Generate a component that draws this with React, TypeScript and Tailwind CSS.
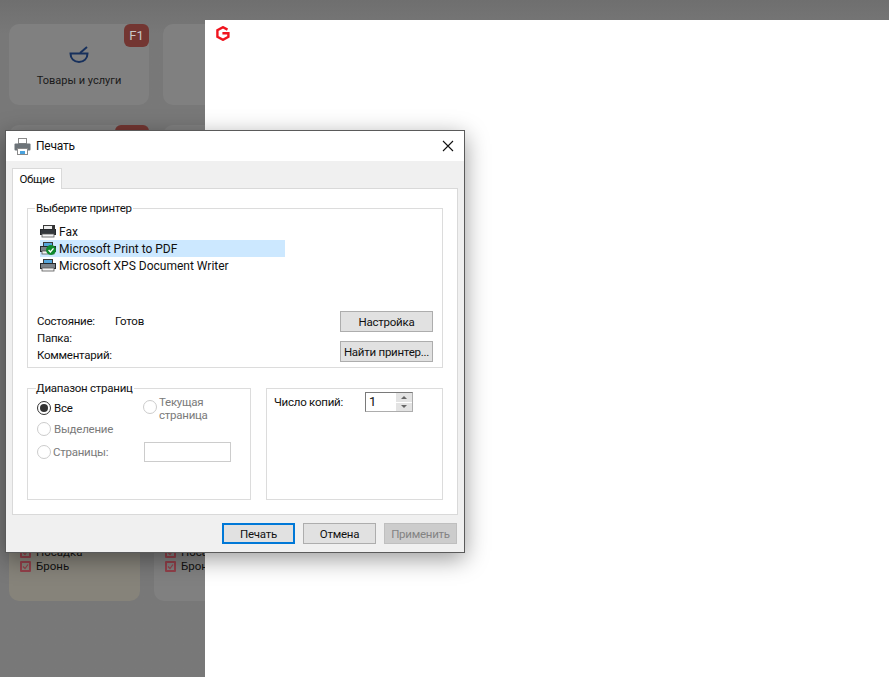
const FONT = "font-['Roboto',sans-serif]";

function PrinterIcon({ kind }: { kind: "fax" | "pdf" | "xps" }) {
  return (
    <svg width="17" height="13" viewBox="0 0 17 13" className="shrink-0">
      <rect x="3.5" y="0.5" width="9" height="4" fill={kind === "fax" ? "#ededed" : "#55a6dc"} stroke="#3a3a3a" />
      <rect x="0.5" y="4.5" width="15" height="5" fill={kind === "fax" ? "#34383c" : "#7c8389"} stroke="#26292c" />
      <rect x="2" y="9" width="12" height="3" fill="#f6f6f6" stroke="#555" strokeWidth="0.8" />
      {kind === "fax" && <rect x="13" y="0" width="2" height="5" fill="#333" />}
      {kind === "pdf" && (
        <>
          <circle cx="11" cy="8" r="5" fill="#0f8a2d" />
          <path d="M8.6 8 L10.4 9.9 L13.5 6.4" stroke="#fff" strokeWidth="1.4" fill="none" />
        </>
      )}
    </svg>
  );
}

function Radio({ checked, disabled }: { checked?: boolean; disabled?: boolean }) {
  return (
    <span
      className={`flex h-[14px] w-[14px] shrink-0 items-center justify-center rounded-full border bg-white ${
        disabled ? "border-[#cccccc]" : "border-[#333333]"
      }`}
    >
      {checked && <span className="h-2 w-2 rounded-full bg-[#333333]" />}
    </span>
  );
}

function WinButton({ label, focused, disabled, className = "" }: { label: string; focused?: boolean; disabled?: boolean; className?: string }) {
  return (
    <div
      className={`flex h-[21px] items-center justify-center whitespace-nowrap ${
        focused ? "border-2 border-[#0078d7]" : disabled ? "border border-[#bfbfbf]" : "border border-[#adadad]"
      } ${disabled ? "bg-[#cccccc] text-[#838383]" : "bg-[#e1e1e1] text-[#111]"} ${className}`}
    >
      {label}
    </div>
  );
}

function PrintDialog() {
  return (
    <div className={`absolute left-[5px] top-[130px] flex h-[423px] w-[460px] flex-col border border-[#5a5a5a] bg-[#f0f0f0] text-[11.5px] leading-[16px] tracking-[-0.25px] text-[#111] shadow-[0_6px_22px_rgba(0,0,0,0.4)] ${FONT}`}>
      <div className="flex h-[30px] shrink-0 items-center bg-white pl-[8px] pr-[10px]">
        <svg width="17" height="17" viewBox="0 0 17 17">
          <rect x="4.5" y="0.5" width="8" height="5" fill="#fff" stroke="#8a8a8a" />
          <rect x="0.5" y="5.5" width="16" height="7" rx="1" fill="#6d7479" />
          <rect x="3.5" y="10.5" width="10" height="6" fill="#fff" stroke="#8a8a8a" />
          <rect x="6" y="13" width="5" height="3" fill="#4aa3df" />
        </svg>
        <span className="ml-[5px] text-[12px]">Печать</span>
        <svg width="12" height="12" viewBox="0 0 12 12" className="ml-auto">
          <path d="M1 1 L11 11 M11 1 L1 11" stroke="#111" strokeWidth="1.1" />
        </svg>
      </div>

      <div className="flex flex-1 flex-col px-[6px] pt-[7px]">
        <div className="relative z-10 -mb-px flex h-[21px] w-[50px] items-center justify-center border border-b-0 border-[#d9d9d9] bg-white">
          Общие
        </div>
        <div className="h-[327px] border border-[#d9d9d9] bg-white px-[14px]">
          <fieldset className="mt-[11px] h-[168px] border border-[#dcdcdc] px-[8px]">
            <legend className="ml-[-1px] bg-white pl-[1px] pr-[1px]">Выберите принтер</legend>
            <div className="mt-[7px] ml-[4px] flex w-[245px] flex-col text-[12px] tracking-normal">
              <div className="flex h-[17px] items-center gap-[1px]">
                <PrinterIcon kind="fax" />
                <span className="ml-[1px]">Fax</span>
              </div>
              <div className="flex h-[17px] items-center gap-[1px] bg-[#cce8ff]">
                <PrinterIcon kind="pdf" />
                <span className="ml-[1px]">Microsoft Print to PDF</span>
              </div>
              <div className="flex h-[17px] items-center gap-[1px]">
                <PrinterIcon kind="xps" />
                <span className="ml-[1px]">Microsoft XPS Document Writer</span>
              </div>
            </div>
            <div className="mt-[37px] flex justify-between pr-[1px]">
              <div className="flex flex-col gap-[1px] pl-[1px] pt-[2px]">
                <div className="flex h-[16px]">
                  <span className="w-[78px]">Состояние:</span>
                  <span>Готов</span>
                </div>
                <span>Папка:</span>
                <span>Комментарий:</span>
              </div>
              <div className="flex flex-col gap-[9px]">
                <WinButton label="Настройка" className="w-[93px]" />
                <WinButton label="Найти принтер..." className="w-[93px]" />
              </div>
            </div>
          </fieldset>

          <div className="mt-[12px] flex justify-between">
            <fieldset className="h-[120px] w-[224px] border border-[#dcdcdc] px-[9px]">
              <legend className="ml-[-1px] bg-white pr-[1px]">Диапазон страниц</legend>
              <div className="flex items-start">
                <div className="flex w-[106px] items-center gap-[3px] pt-[4px]">
                  <Radio checked />
                  <span>Все</span>
                </div>
                <div className="flex items-start text-[#7a7a7a]">
                  <span className="mt-[4px]"><Radio disabled /></span>
                  <span className="ml-[2px] leading-[13px]">
                    Текущая
                    <br />
                    страница
                  </span>
                </div>
              </div>
              <div className="mt-[-1px] flex items-center gap-[3px] text-[#7a7a7a]">
                <Radio disabled />
                <span>Выделение</span>
              </div>
              <div className="mt-[5px] flex h-[20px] items-center text-[#7a7a7a]">
                <Radio disabled />
                <span className="ml-[2px] w-[91px]">Страницы:</span>
                <div className="h-[20px] w-[87px] border border-[#cccccc] bg-white" />
              </div>
            </fieldset>
            <div className="mt-[8px] h-[112px] w-[177px] border border-[#dcdcdc] px-[7px] pt-[3px]">
              <div className="flex items-center">
                <span className="w-[91px]">Число копий:</span>
                <div className="flex h-[20px] w-[48px] border border-[#adadad] border-l-[#7a7a7a] border-t-[#7a7a7a]">
                  <span className="flex-1 pl-[3px] text-[13px] leading-[18px]">1</span>
                  <div className="flex w-[16px] flex-col gap-[1px]">
                    <div className="flex flex-1 items-center justify-center bg-[#e3e3e3]">
                      <span className="h-0 w-0 border-x-[3px] border-b-[3px] border-x-transparent border-b-[#666]" />
                    </div>
                    <div className="flex flex-1 items-center justify-center bg-[#e3e3e3]">
                      <span className="h-0 w-0 border-x-[3px] border-t-[3px] border-x-transparent border-t-[#666]" />
                    </div>
                  </div>
                </div>
              </div>
            </div>
          </div>
        </div>
        <div className="mt-[8px] flex justify-end gap-[8px] pr-[1px]">
          <WinButton label="Печать" focused className="w-[73px]" />
          <WinButton label="Отмена" className="w-[73px]" />
          <WinButton label="Применить" disabled className="w-[73px]" />
        </div>
      </div>
    </div>
  );
}

function Check() {
  return (
    <span className="flex h-[11px] w-[11px] items-center justify-center rounded-[1px] border-2 border-[#93404a]">
      <svg width="7" height="7" viewBox="0 0 7 7">
        <path d="M1 3.5 L3 5.5 L6 1.5" stroke="#93404a" strokeWidth="1.2" fill="none" />
      </svg>
    </span>
  );
}

function BottomCard({ beige, last }: { beige?: boolean; last?: string }) {
  return (
    <div className={`flex h-[385px] w-[131px] flex-col justify-end rounded-[10px] pb-[28px] pl-[11px] text-[11.5px] leading-[14px] text-[#111] ${beige ? "bg-[#86837a]" : "bg-[#808080]"}`}>
      <div className="flex items-center gap-[5px]"><Check /><span>Посадка</span></div>
      <div className="flex items-center gap-[5px]"><Check /><span>{last}</span></div>
    </div>
  );
}

export default function App() {
  return (
    <div className={`relative h-[677px] w-[889px] overflow-hidden bg-gradient-to-b from-[#6f6f6f] to-[#787878] to-[5%] ${FONT}`}>
      <div className="flex flex-col pl-[9px] pt-[24px]">
        <div className="flex gap-[14px]">
          <div className="relative flex h-[81px] w-[140px] flex-col items-center rounded-[10px] bg-[#808080] pt-[22px]">
            <svg width="20" height="17" viewBox="0 0 20 17" fill="none" stroke="#17305c" strokeWidth="2">
              <path d="M1.5 7.5 H18.5 C18.5 12.5 15 16 10 16 C5 16 1.5 12.5 1.5 7.5 Z" />
              <path d="M11 7 L18 1" />
            </svg>
            <span className="mt-[11px] text-[11px] leading-[14px] text-[#1a1a1a]">Товары и услуги</span>
            <div className="absolute right-0 top-0 flex h-[23px] w-[25px] items-center justify-center rounded-[6px] bg-[#733632] text-[13px] text-[#c8c8c8]">F1</div>
          </div>
          <div className="h-[81px] w-[140px] rounded-[10px] bg-[#808080]" />
        </div>
        <div className="mt-[20px] flex gap-[14px]">
          <div className="relative h-[90px] w-[140px] rounded-[10px] bg-[#808080]">
            <div className="absolute right-0 top-0 h-[23px] w-[34px] rounded-[6px] bg-[#733632]" />
          </div>
          <div className="h-[90px] w-[140px] rounded-[10px] bg-[#808080]" />
        </div>
        <div className="mt-[1px] flex gap-[14px]">
          <BottomCard beige last="Бронь" />
          <BottomCard last="Бронь" />
        </div>
      </div>

      <div className="absolute bottom-0 left-[205px] right-0 top-[20px] bg-white pl-[11px] pt-[6px]">
        <svg width="14" height="15" viewBox="0 0 14 15" fill="none" stroke="#f0141e" strokeWidth="2.4">
          <path d="M11.5 3.6 L7 1.2 L1.4 4.2 V10.8 L7 13.8 L12.4 10.8 V7.2 H6.4" />
        </svg>
      </div>

      <PrintDialog />
    </div>
  );
}
